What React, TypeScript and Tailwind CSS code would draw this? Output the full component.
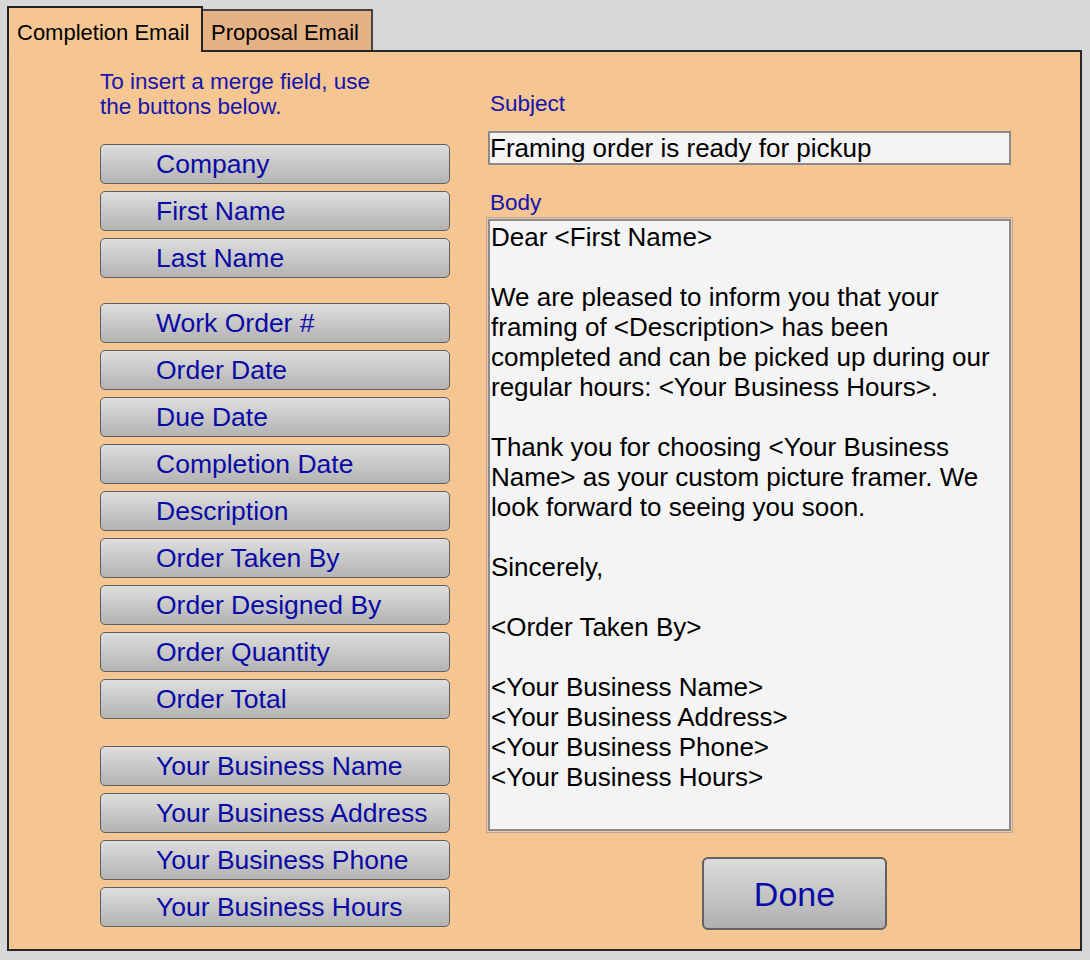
import { useState } from 'react';

const fieldGroups: string[][] = [
    ['Company', 'First Name', 'Last Name'],
    [
        'Work Order #',
        'Order Date',
        'Due Date',
        'Completion Date',
        'Description',
        'Order Taken By',
        'Order Designed By',
        'Order Quantity',
        'Order Total',
    ],
    ['Your Business Name', 'Your Business Address', 'Your Business Phone', 'Your Business Hours'],
];

const bodyLines = [
    'Dear <First Name>',
    '',
    'We are pleased to inform you that your',
    'framing of <Description> has been',
    'completed and can be picked up during our',
    'regular hours: <Your Business Hours>.',
    '',
    'Thank you for choosing <Your Business',
    'Name> as your custom picture framer. We',
    'look forward to seeing you soon.',
    '',
    'Sincerely,',
    '',
    '<Order Taken By>',
    '',
    '<Your Business Name>',
    '<Your Business Address>',
    '<Your Business Phone>',
    '<Your Business Hours>',
];

const MergeButton = ({ label }: { label: string }) => (
    <button
        type="button"
        className="h-[40px] w-[350px] rounded-[5px] border border-[#5f5f5f] bg-gradient-to-b from-[#dedede] to-[#b3b3b3] pl-[55px] text-left text-[26.5px] leading-[38px] text-[#0a0aa6]"
    >
        {label}
    </button>
);

export default function App() {
    const [tab, setTab] = useState<'completion' | 'proposal'>('completion');

    return (
        <div className="h-[960px] w-[1090px] overflow-hidden bg-[#d7d7d7] font-['Liberation_Sans',Arial,sans-serif]">
            {/* tabs */}
            <div className="flex items-end pl-[7px] pt-[6px]">
                <button
                    type="button"
                    onClick={() => setTab('completion')}
                    className="relative z-10 -mb-[2px] h-[46px] w-[196px] border-2 border-b-0 border-[#222] bg-[#f5c592] pl-[8px] pt-[5px] text-left text-[22px] leading-[25px] text-black"
                >
                    <span className="block">Completion Email</span>
                </button>
                <button
                    type="button"
                    onClick={() => setTab('proposal')}
                    className="h-[41px] w-[170px] border-t-2 border-r-2 border-[#444] bg-[#e5b286] pl-[8px] pt-[4px] text-left text-[22px] leading-[25px] text-black"
                >
                    <span className="block">Proposal Email</span>
                </button>
            </div>

            {/* panel */}
            <div className="ml-[7px] flex h-[901px] w-[1075px] border-2 border-[#262626] bg-[#f5c592] pl-[91px] pt-[17px]">
                <div className="flex w-[350px] flex-col">
                    <p className="mb-[25px] text-[22.5px] leading-[25px] text-[#1414ae]">
                        To insert a merge field, use
                        <br />
                        the buttons below.
                    </p>
                    <div className="flex flex-col">
                        {fieldGroups.map((group, i) => (
                            <div
                                key={i}
                                className={`flex flex-col gap-[7px] ${i === 1 ? 'mt-[25px]' : ''} ${i === 2 ? 'mt-[27px]' : ''}`}
                            >
                                {group.map((f) => (
                                    <MergeButton key={f} label={f} />
                                ))}
                            </div>
                        ))}
                    </div>
                </div>

                <div className="ml-[36px] flex w-[527px] flex-col pt-[22px]">
                    <div className="pl-[4px] text-[22.5px] leading-[25px] text-[#1414ae]">Subject</div>
                    <div className="ml-[2px] mt-[15px] h-[34px] w-[523px] border-2 border-[#8a8a8a] bg-[#f4f4f4] text-[26px] leading-[30px] text-black">
                        {tab === 'completion' ? 'Framing order is ready for pickup' : 'Your framing proposal'}
                    </div>
                    <div className="mt-[25px] pl-[4px] text-[22.5px] leading-[25px] text-[#1414ae]">Body</div>
                    <div className="mt-[2px] h-[616px] w-[527px] border border-[#c3a39b] bg-[#ecc7a6] p-[1px]">
                        <div className="h-full w-full border-2 border-[#8c8c8c] bg-[#f4f4f4] pl-[1px] pt-[1px] text-[26px] leading-[30px] text-black">
                            {bodyLines.map((line, i) => (
                                <div key={i} className="h-[30px] whitespace-pre">
                                    {line}
                                </div>
                            ))}
                        </div>
                    </div>
                    <button
                        type="button"
                        className="ml-[216px] mt-[24px] h-[73px] w-[185px] rounded-[6px] border-2 border-[#626262] bg-gradient-to-b from-[#dcdcdc] to-[#b0b0b0] text-[34px] leading-none text-[#0a0aa6]"
                    >
                        Done
                    </button>
                </div>
            </div>
        </div>
    );
}
